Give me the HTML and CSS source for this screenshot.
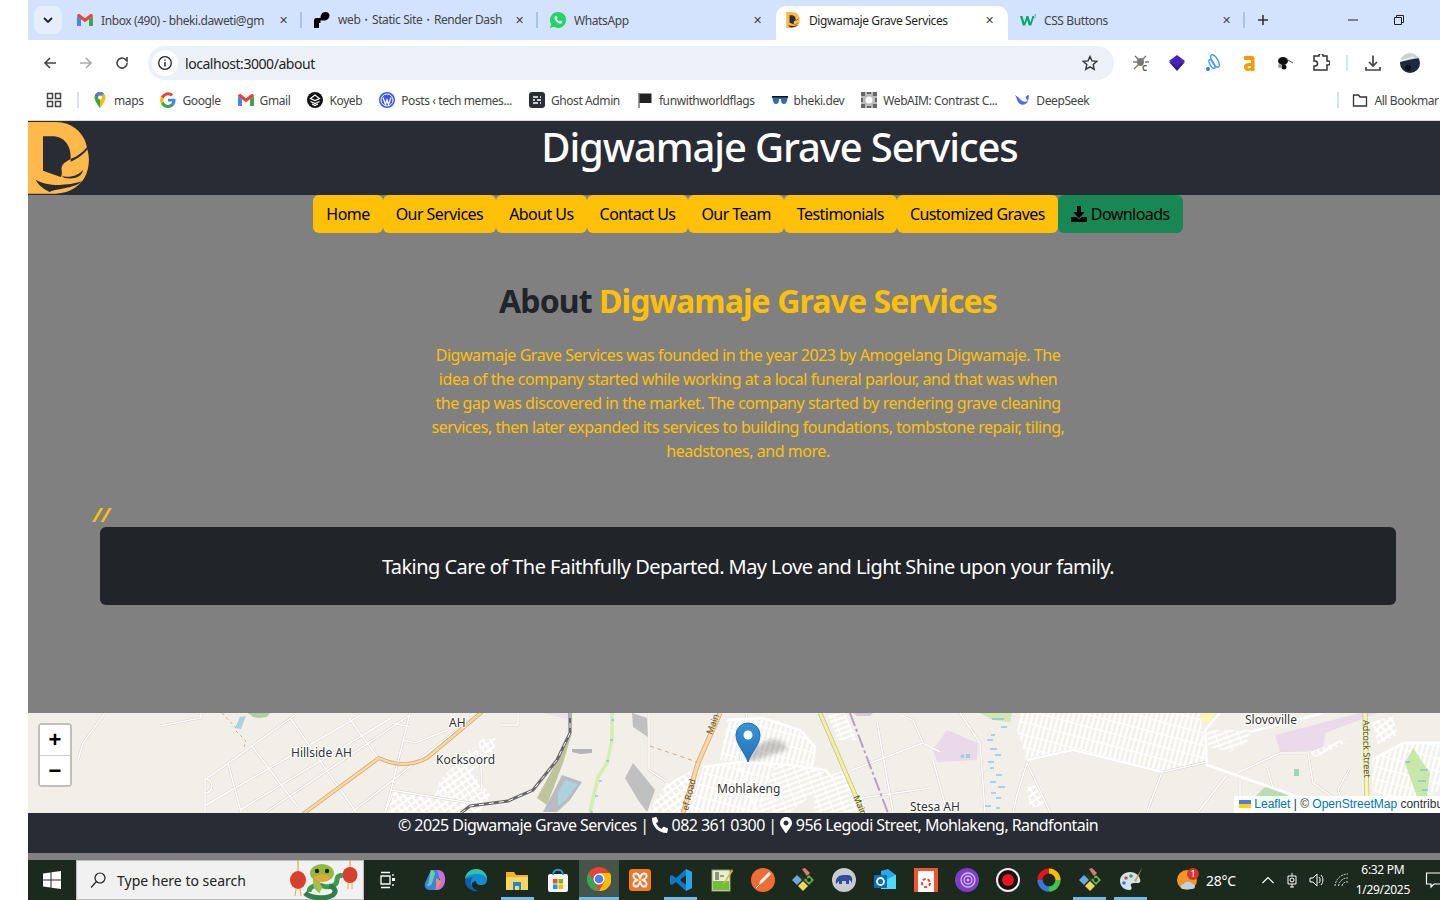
FILE: index.html
```html
<!DOCTYPE html>
<html lang="en">
<head>
    <meta charset="UTF-8">
    <meta name="viewport" content="width=device-width, initial-scale=1.0">
    <title>Digwamaje Grave Services</title>
    <link rel="stylesheet" href="styles.css">
</head>
<body>
    <svg class="sprites" width="0" height="0">
        <defs>
            <symbol id="gmail" viewBox="0 0 24 18">
                <path d="M0 3v13.500C0 17.300.7 18 1.500 18H6V8z" fill="#4285f4"/>
                <path d="M24 3v13.500c0 .8-.7 1.500-1.500 1.500H18V8z" fill="#34a853"/>
                <path d="M18 2.500L24 3v0l-6 5z" fill="#fbbc04"/>
                <path d="M0 3C0 .5 2.700-.8 4.700.7L12 6.200 19.300.7C21.300-.8 24 .5 24 3l-6 5-6 4.500L6 8z" fill="#ea4335"/>
            </symbol>
            <symbol id="logo" viewBox="85 22 183 216">
                <path d="M85 22H170C225 22 258 65 262 100C275 140 265 190 235 212C215 230 190 237 165 237H85Z" fill="#ffb84a"/>
                <path d="M130 65H158C195 65 215 95 213 133C195 143 183 150 186 168C188 178 185 185 183 187L130 168Z" fill="#282c34"/>
                <path d="M213 133C235 125 250 112 262 98L264 104C250 120 230 135 213 141Z" fill="#282c34"/>
                <path d="M186 185C215 190 240 180 250 165C248 185 225 195 195 190Z" fill="#282c34"/>
                <path d="M108 195C140 215 200 215 247 200C225 222 170 222 150 232C130 222 115 210 108 195Z" fill="#282c34"/>
            </symbol>
            <symbol id="gitapp" viewBox="0 0 24 24">
                <path d="M12 3l5 5-5 5-5-5z" fill="#1f3a1f"/>
                <path d="M11 1l3-1 5 5-3 3z" fill="#e8747a"/>
                <path d="M6 7l5 5-5 5-5-5z" fill="#6aa6e8"/>
                <path d="M18 7l5 5-5 5-5-5z" fill="#62b04b"/>
                <path d="M12 13l5 5-5 5-5-5z" fill="#f5d35c"/>
                <path d="M8 2l8 9" stroke="#1b2a1d" stroke-width="1.500"/>
                <circle cx="18" cy="12" r="2" fill="#1b2a1d"/>
            </symbol>
        </defs>
    </svg>

    <div class="browser">
        <div class="tabstrip">
            <button class="tablist-btn">
                <svg width="10" height="6" viewBox="0 0 10 6"><path d="M1 1l4 4 4-4" fill="none" stroke="#1f1f1f" stroke-width="1.800"/></svg>
            </button>
            <div class="tabs">
                <div class="tab sep">
                    <svg class="favicon"><use href="#gmail"/></svg>
                    <span class="tab-title">Inbox (490) - bheki.daweti@gm</span>
                    <span class="tab-close">✕</span>
                </div>
                <div class="tab sep">
                    <svg class="favicon" viewBox="0 0 16 16"><path d="M0 16V8.500C0 6.500 1.500 6 3 6h3.500C6.500 3 8 0 11.500 0c2.500 0 4 1.500 4 3.500S14 8 11 8.500H6.500V11H5v5z" fill="#000"/></svg>
                    <span class="tab-title">web・Static Site・Render Dash</span>
                    <span class="tab-close">✕</span>
                </div>
                <div class="tab">
                    <svg class="favicon" viewBox="0 0 16 16"><path d="M8 0a8 8 0 0 0-6.800 12.200L0 16l3.900-1.200A8 8 0 1 0 8 0z" fill="#25d366"/><path d="M5.500 4c-.8.500-1.200 1.500-.8 2.800.7 2.200 2.500 4 4.600 4.700 1.300.4 2.400 0 2.900-.9l-.2-1.100-1.700-.8-.8.9c-1.200-.5-2.100-1.400-2.700-2.600l.8-.9-.8-1.800z" fill="#fff"/></svg>
                    <span class="tab-title">WhatsApp</span>
                    <span class="tab-close">✕</span>
                </div>
                <div class="tab tab-active">
                    <svg class="favicon"><use href="#logo"/></svg>
                    <span class="tab-title">Digwamaje Grave Services</span>
                    <span class="tab-close">✕</span>
                </div>
                <div class="tab sep">
                    <svg class="favicon" viewBox="0 0 20 16"><path d="M0 3h3l2.500 8L8 3h2.500l2.500 8 2.500-8h2.500l-4 12h-3L9 8l-2.500 7h-3z" fill="#04aa6d"/><text x="17" y="5" class="w3-mark">3</text></svg>
                    <span class="tab-title">CSS Buttons</span>
                    <span class="tab-close">✕</span>
                </div>
            </div>
            <svg class="newtab" width="12" height="12" viewBox="0 0 12 12"><path d="M6 1v10M1 6h10" stroke="#333" stroke-width="1.600"/></svg>
            <div class="win-btns">
                <svg width="12" height="12" viewBox="0 0 12 12"><path d="M1 6h10" stroke="#222"/></svg>
                <svg width="12" height="12" viewBox="0 0 12 12"><path d="M1.500 3.500h7v7h-7zM3.500 3.500v-2h7v7h-2" fill="none" stroke="#222"/></svg>
            </div>
        </div>

        <div class="toolbar">
            <svg class="tool" viewBox="0 0 16 16"><path d="M14 8H3M8 3L3 8l5 5" fill="none" stroke="#444" stroke-width="1.600"/></svg>
            <svg class="tool" viewBox="0 0 16 16"><path d="M2 8h11M8 3l5 5-5 5" fill="none" stroke="#aaa" stroke-width="1.600"/></svg>
            <svg class="tool" viewBox="0 0 16 16"><path d="M13 8a5 5 0 1 1-1.500-3.500L13 6V2" fill="none" stroke="#444" stroke-width="1.600"/></svg>
            <div class="omnibox">
                <span class="site-info">
                    <svg width="16" height="16" viewBox="0 0 16 16"><circle cx="8" cy="8" r="6.300" fill="none" stroke="#222" stroke-width="1.300"/><path d="M8 7v4.500M8 4.500v1.300" stroke="#222" stroke-width="1.400"/></svg>
                </span>
                <span class="url">localhost:3000/about</span>
                <svg class="star" width="16" height="16" viewBox="0 0 16 16"><path d="M8 1.500l2 4.400 4.800.5-3.600 3.200 1 4.700L8 11.900l-4.200 2.400 1-4.700L1.200 6.400 6 5.900z" fill="none" stroke="#333" stroke-width="1.400"/></svg>
            </div>
            <div class="extensions">
                <svg class="ext" viewBox="0 0 18 18"><path d="M3 2l4 4M14 2l-4 4M1 8h4M13 8h4M2 15l4-4" stroke="#777" stroke-width="1.400"/><ellipse cx="8.500" cy="8" rx="3.500" ry="4" fill="#777"/><text x="12.500" y="17" class="ext-c">C</text></svg>
                <svg class="ext" viewBox="0 0 18 18"><path d="M9 9l8-1-8 9-8-9z" fill="#2e1a8a"/><path d="M9 1l8 6-8 6-8-6z" fill="#4a22b8"/></svg>
                <svg class="ext" viewBox="0 0 18 18"><g fill="none" stroke="#3b9cf2" stroke-width="1.400"><ellipse cx="11" cy="7" rx="3" ry="7" transform="rotate(-30 11 7)"/><ellipse cx="8" cy="10" rx="2" ry="5" transform="rotate(-30 8 10)"/></g><circle cx="4" cy="15" r="2" fill="#2a7de1"/></svg>
                <svg class="ext" viewBox="0 0 18 18"><path d="M4 2h8c1.500 0 2.500 1 2.500 2.500V17H11v-1c-2 1.500-7 1.800-7-3.500 0-3.500 4-3.500 7-3.500V6H4zM11 12c-1.500 0-3.500 0-3.500 1.200S10 14.500 11 13.500z" fill="#f90"/></svg>
                <svg class="ext" viewBox="0 0 18 18"><ellipse cx="7" cy="7" rx="5" ry="4" fill="#111"/><circle cx="8" cy="13" r="2.500" fill="#111"/><path d="M12 6l5 3" stroke="#555"/><circle cx="4" cy="12" r="2" fill="#999"/></svg>
                <svg class="ext" viewBox="0 0 18 18"><path d="M2 2h5v-.5a2 2 0 0 1 4 0V2h4v5h1a2 2 0 0 1 0 4h-1v5H2v-4h1a2.500 2.500 0 0 0 0-5H2z" fill="none" stroke="#333" stroke-width="1.500"/></svg>
                <span class="tool-sep"></span>
                <svg class="ext" viewBox="0 0 18 18"><path d="M9 1.500v10M5 8l4 4 4-4M2 13v3h14v-3" fill="none" stroke="#444" stroke-width="1.700"/></svg>
                <svg class="avatar" viewBox="0 0 20 20"><rect width="20" height="20" fill="#c9d2d8"/><path d="M0 9c6-1 10-3 20-4v15H0z" fill="#1c2a44"/><path d="M0 8c5-1 9-3 14-4" stroke="#fff" fill="none"/><circle cx="8" cy="15" r="3" fill="#0c1220"/></svg>
            </div>
        </div>

        <div class="bookmarks">
            <svg class="bm-apps" viewBox="0 0 16 16"><path d="M1.500 1.500h5v5h-5zM9.500 1.500h5v5h-5zM1.500 9.500h5v5h-5zM9.500 9.500h5v5h-5z" fill="none" stroke="#444" stroke-width="1.500"/></svg>
            <span class="bm-sep"></span>
            <div class="bm"><svg class="favicon" viewBox="0 0 16 16"><path d="M8 0a5.500 5.500 0 0 0-5.500 5.500C2.500 9.500 8 16 8 16z" fill="#34a853"/><path d="M8 0a5.500 5.500 0 0 1 5.500 5.500C13.500 9.500 8 16 8 16z" fill="#fbbc04"/><path d="M4 1.500A5.500 5.500 0 0 1 12 1.500L8 5.500z" fill="#4285f4"/><path d="M4 1.500L2.800 3.500 8 5.500z" fill="#ea4335"/><circle cx="8" cy="5.500" r="2" fill="#fff"/></svg>maps</div>
            <div class="bm"><svg class="favicon" viewBox="0 0 16 16"><path d="M15.500 8.200c0-.6 0-1-.1-1.500H8v2.900h4.300a3.700 3.700 0 0 1-1.600 2.400v2h2.500c1.500-1.400 2.300-3.400 2.300-5.800z" fill="#4285f4"/><path d="M8 16c2.100 0 3.900-.7 5.200-1.900l-2.500-2c-.7.500-1.600.8-2.700.8-2 0-3.800-1.400-4.400-3.200H1v2A8 8 0 0 0 8 16z" fill="#34a853"/><path d="M3.600 9.700a4.800 4.800 0 0 1 0-3V4.600H1a8 8 0 0 0 0 7.200z" fill="#fbbc04"/><path d="M8 3.200c1.200 0 2.200.4 3 1.200l2.200-2.200A8 8 0 0 0 1 4.600l2.600 2C4.200 4.600 6 3.200 8 3.200z" fill="#ea4335"/></svg>Google</div>
            <div class="bm"><svg class="favicon"><use href="#gmail"/></svg>Gmail</div>
            <div class="bm"><svg class="favicon" viewBox="0 0 16 16"><circle cx="8" cy="8" r="8" fill="#111"/><path d="M3.500 6.500L8 3l4.500 3.500L8 8.500zM3.500 9.500L8 11.500l4.500-2M5 12l3 1.500 3-1.500" fill="none" stroke="#fff" stroke-width="1.200"/></svg>Koyeb</div>
            <div class="bm"><svg class="favicon" viewBox="0 0 16 16"><circle cx="8" cy="8" r="8" fill="#3858e9"/><circle cx="8" cy="8" r="6" fill="none" stroke="#fff"/><path d="M4 5.500l2.500 7L8 8l1.500 4.500 2.500-7" fill="none" stroke="#fff" stroke-width="1.300"/></svg>Posts ‹ tech memes...</div>
            <div class="bm"><svg class="favicon" viewBox="0 0 16 16"><rect width="16" height="16" rx="3" fill="#2b2f33"/><path d="M4 5h5M11 5h1M4 8h2M8 8h4M4 11h5M11 11h1" stroke="#fff" stroke-width="1.400"/></svg>Ghost Admin</div>
            <div class="bm"><svg class="favicon" viewBox="0 0 16 16"><path d="M2 1v15" stroke="#555" stroke-width="1.200"/><path d="M2.500 1.500h12V11h-12z" fill="#222"/></svg>funwithworldflags</div>
            <div class="bm"><svg class="favicon" viewBox="0 0 16 10"><path d="M0 1h16v2h-.5C15 7 14 9 12 9S9 7 8.800 4H7.200C7 7 6 9 4 9S1 7 .5 3H0z" fill="#2b6ea8"/><path d="M0 1h16v1.500H0z" fill="#111"/></svg>bheki.dev</div>
            <div class="bm"><svg class="favicon" viewBox="0 0 16 16"><rect width="16" height="16" fill="#bbb"/><circle cx="8" cy="8" r="3.500" fill="#fff"/><path d="M0 0h4v4H0zM12 0h4v4h-4zM0 12h4v4H0zM12 12h4v4h-4zM6 0h4v2H6zM6 14h4v2H6zM0 6h2v4H0zM14 6h2v4h-2z" fill="#666"/></svg>WebAIM: Contrast C...</div>
            <div class="bm"><svg class="favicon" viewBox="0 0 16 16"><path d="M1 3c2 3 2 7 5 9s7 0 8-3c-3 1-5 1-7-1S3 4 1 3z" fill="#4d6bfe"/><path d="M15 3c-2 0-3 1-3.500 2.500 1 1 1.500 2.500 1.500 4 1.500-1.500 2-4 2-6.500z" fill="#4d6bfe"/></svg>DeepSeek</div>
            <span class="bm-sep bm-sep-end"></span>
            <div class="bm bm-all"><svg class="favicon" viewBox="0 0 16 16"><path d="M1.500 3h5l1.500 2h6.500v9h-13z" fill="none" stroke="#333" stroke-width="1.300"/></svg>All Bookmar</div>
        </div>

        <div class="page">
            <header class="site-header">
                <svg class="site-logo"><use href="#logo"/></svg>
                <h1>Digwamaje Grave Services</h1>
            </header>

            <main class="site-main">
                <nav class="site-nav">
                    <a href="#">Home</a>
                    <a href="#">Our Services</a>
                    <a href="#">About Us</a>
                    <a href="#">Contact Us</a>
                    <a href="#">Our Team</a>
                    <a href="#">Testimonials</a>
                    <a href="#">Customized Graves</a>
                    <a href="#" class="nav-download">
                        <svg class="fa" viewBox="0 0 512 512"><path d="M216 0h80c13.300 0 24 10.700 24 24v168h87.700c17.800 0 26.700 21.500 14.100 34.100L269.700 378.300c-7.500 7.500-19.800 7.500-27.300 0L90.100 226.100c-12.600-12.600-3.700-34.100 14.100-34.100H192V24c0-13.300 10.700-24 24-24zm296 376v112c0 13.300-10.700 24-24 24H24c-13.300 0-24-10.700-24-24V376c0-13.300 10.700-24 24-24h146.700l49 49c20.100 20.100 52.500 20.100 72.600 0l49-49H488c13.300 0 24 10.700 24 24z"/></svg>
                        Downloads
                    </a>
                </nav>

                <h2 class="about-title">About <span>Digwamaje Grave Services</span></h2>
                <p class="about-text">Digwamaje Grave Services was founded in the year 2023 by Amogelang Digwamaje. The idea of the company started while working at a local funeral parlour, and that was when the gap was discovered in the market. The company started by rendering grave cleaning services, then later expanded its services to building foundations, tombstone repair, tiling, headstones, and more.</p>

                <div class="quote-mark">//</div>
                <div class="quote-box">Taking Care of The Faithfully Departed. May Love and Light Shine upon your family.</div>
            </main>

            <section class="map">
                <svg class="map-art" viewBox="28 713 1412 100" width="1412" height="100">
                    <defs>
                        <pattern id="blockA" width="5" height="12" patternUnits="userSpaceOnUse" patternTransform="rotate(15)">
                            <rect width="5" height="12" fill="#f2efe9"/>
                            <path d="M2.500 0V12M0 0H5" stroke="#fff" stroke-width="2.400"/>
                        </pattern>
                        <pattern id="blockB" width="5" height="11" patternUnits="userSpaceOnUse" patternTransform="rotate(70)">
                            <rect width="5" height="11" fill="#f2efe9"/>
                            <path d="M2.500 0V11M0 0H5" stroke="#fff" stroke-width="2.200"/>
                        </pattern>
                        <pattern id="blockC" width="6" height="6" patternUnits="userSpaceOnUse" patternTransform="rotate(-35)">
                            <rect width="6" height="6" fill="#f2efe9"/>
                            <path d="M0 1H6M1 0V6" stroke="#fff" stroke-width="1.800"/>
                        </pattern>
                        <linearGradient id="pinFill" x1="0" y1="0" x2="0" y2="1">
                            <stop offset="0" stop-color="#3a94d8"/>
                            <stop offset="1" stop-color="#2273b8"/>
                        </linearGradient>
                        <filter id="pinBlur"><feGaussianBlur stdDeviation="2"/></filter>
                        <g id="streets">
                            <path d="M105 713L83 743 78 760M160 726L201 718V713"/>
                            <path d="M295 715L205 780V812M361 715L206 805M391 718L240 810M410 715L266 812M470 720L352 812"/>
                            <path d="M251 745L298 807M228 763L241 812M290 718L356 812M348 717L378 758M410 713L391 790 385 812"/>
                            <path d="M403 740L415 743 448 730M392 723L410 727M205 793a6 6 0 0 0 0 -14"/>
                            <path d="M391 790L470 803M385 812L392 795M480 748L482 790H477"/>
                            <path d="M500 725H518V713M508 713L518 700"/>
                            <path d="M649 713V770L667 782M747 713L740 762"/>
                            <path d="M852 770L923 743M877 722L893 812M862 798L930 788M923 743L913 720 900 715M933 760L947 812M923 743L940 752"/>
                            <path d="M960 713L980 743 985 812M1027 763L1050 812M1027 763L1017 795 1013 812M1162 772L1147 812M1227 775L1198 812"/>
                            <path d="M1280 753L1237 773M1267 767L1273 788M1240 780V800M1308 753L1313 783 1337 800M1350 768L1338 790 1343 803M1280 753L1308 753"/>
                            <path d="M1027 760L1073 750 1163 772 1207 762"/>
                        </g>
                    </defs>
                    <rect x="28" y="713" width="1412" height="100" fill="#f2efe9"/>

                    <!-- parks, water, land use -->
                    <path d="M248 713h22l-3 4-8 1-6-1z" fill="#aed1a0"/>
                    <path d="M240 717l6-1-5 13-6-1z" fill="#aad3df"/>
                    <path d="M222 713L236 728M236 731l10 10-2 6" fill="none" stroke="#d9a96a" stroke-dasharray="3 3"/>
                    <path d="M632 713l15 5 1 19-15-10zM633 763l14 17 8 10-8 22-9-12-13-22z" fill="#c0c0c0"/>
                    <path d="M572 733L537 798 547 805 563 763z" fill="#c0c49a"/>
                    <path d="M562 775L582 782 570 800 557 812H543L553 793z" fill="#b8bcc0"/>
                    <path d="M565 780L578 784 566 800 558 806 558 793z" fill="#aad3df"/>
                    <path d="M572 749H592V753L580 754 572 752z" fill="#b5b5b5"/>
                    <path d="M612 713V740L607 763 598 777 590 812" fill="none" stroke="#d4eeb0" stroke-width="3.500"/>
                    <path d="M543 713H570V720z" fill="#ece0ec"/>
                    <path d="M933 750L947 730 978 743 977 760 937 762z" fill="#e9d9ea"/>
                    <path d="M960 756l3-2 2 3-3 1zM966 754h4v4h-4z" fill="#9ccfd4"/>
                    <path d="M853 713H873L870 716 857 716z" fill="#d8c8d8"/>
                    <path d="M980 713H1012L1010 722 993 720z" fill="#cfe8b0"/>
                    <path d="M1275 735L1360 713H1378L1325 733 1323 750 1280 752z" fill="#ebdaea"/>
                    <path d="M1200 713H1215L1210 722H1202zM1137 743H1143V748H1138z" fill="#fdf7b0"/>
                    <path d="M1167 713H1182L1180 720H1170z" fill="#b4b48a"/>
                    <path d="M1212 740h5v4h-5zM1294 769h5v7h-5z" fill="#96dcb9"/>
                    <path d="M1255 797L1267 785 1293 798 1290 813H1255z" fill="#b9dcb0"/>

                    <!-- residential blocks -->
                    <path d="M727 720L763 718 800 730 815 747 812 767 740 762 720 760z" fill="url(#blockA)"/>
                    <path d="M703 767L740 762 775 765 790 790 757 812H690z" fill="url(#blockA)"/>
                    <path d="M775 765L825 770 812 795 790 812H757z" fill="url(#blockB)"/>
                    <path d="M812 780L847 770 855 790 860 812H815z" fill="url(#blockB)"/>
                    <path d="M648 812L667 783 700 767 690 812z" fill="url(#blockC)"/>
                    <path d="M828 715L845 713 857 740 838 740z" fill="url(#blockB)"/>
                    <path d="M1020 713H1200L1207 760 1163 772 1073 750 1027 760 1017 730z" fill="url(#blockA)"/>
                    <path d="M1207 730L1250 730 1247 743 1230 752 1208 747z" fill="url(#blockB)"/>
                    <path d="M1027 787L1040 785 1045 805 1030 808z" fill="url(#blockC)"/>
                    <path d="M1310 752L1347 738 1342 745 1315 757z" fill="url(#blockC)"/>
                    <path d="M1372 722L1393 716 1397 735 1378 745z" fill="url(#blockC)"/>
                    <path d="M1372 760L1403 743H1440V790L1407 807 1372 790z" fill="url(#blockA)"/>
                    <path d="M1413 748L1430 773 1427 797H1417L1405 763z" fill="#c7e8a8"/>
                    <path d="M440 780L470 750 484 752 472 773 490 795 480 812H430z" fill="url(#blockC)"/>
                    <path d="M478 740L496 738 494 758 482 765z" fill="url(#blockC)"/>
                    <path d="M385 812L392 790 470 803 470 812z" fill="url(#blockC)"/>

                    <!-- minor streets -->
                    <g fill="none">
                        <use href="#streets" stroke="#d4d0c8" stroke-width="2.400"/>
                        <use href="#streets" stroke="#fff" stroke-width="1.500"/>
                    </g>
                    <g fill="none" stroke="#fff" stroke-width="2.600">
                        <path d="M703 767L740 762 790 765 825 770 833 778M738 762L757 812M727 720L763 718 800 730 815 747 812 767"/>
                        <path d="M1205 730L1207 765 1307 800M1205 730L1220 713M1250 732L1323 713M1027 760L1073 750 1163 772"/>
                        <path d="M1372 760L1403 743H1440"/>
                    </g>

                    <!-- main roads -->
                    <path d="M303 814L379 758Q404 770 427 758L482 712" fill="none" stroke="#d9a96a" stroke-width="4"/>
                    <path d="M303 814L379 758Q404 770 427 758L482 712" fill="none" stroke="#f7d9a8" stroke-width="2.400"/>
                    <path d="M720 713L698 763 683 813" fill="none" stroke="#d9a96a" stroke-width="5"/>
                    <path d="M720 713L698 763 683 813" fill="none" stroke="#fcd6a4" stroke-width="3.400"/>
                    <path d="M820 713L863 813" fill="none" stroke="#c4c47a" stroke-width="4.500"/>
                    <path d="M820 713L863 813" fill="none" stroke="#f0f0a8" stroke-width="3"/>
                    <path d="M1365 713L1367 800" fill="none" stroke="#c4c47a" stroke-width="5"/>
                    <path d="M1365 713L1367 800" fill="none" stroke="#f6f6b4" stroke-width="3.500"/>
                    <path d="M570 713V733L557 760 533 790 508 801 470 806 461 813" fill="none" stroke="#666" stroke-width="3"/>
                    <path d="M570 713V733L557 760 533 790 508 801 470 806 461 813" fill="none" stroke="#fff" stroke-width="1" stroke-dasharray="5 5"/>
                    <path d="M850 713L888 813" fill="none" stroke="#b89ec0" stroke-width="2" stroke-dasharray="14 3 3 3"/>
                    <path d="M650 746L697 762" fill="none" stroke="#d3a77a" stroke-dasharray="4 4"/>

                    <!-- water dashes -->
                    <path d="M611 720h3M610 740h3M606 761h3M599 781h3M595 796h3M590 812h3M992 719h12M1001 727h6M991 735h4M987 740h6M990 749h7M995 755h6M988 762h6M990 768h4M996 775h6M990 782h6M998 787h7M991 793h5M996 798h5M985 806h6M996 808h4M1405 762h5M1420 770h8M1418 781h8M1422 790h6M1418 797h8" stroke="#5fb3f2" stroke-width="1"/>

                    <g class="map-labels">
                        <text x="449" y="727">AH</text>
                        <text x="291" y="757">Hillside AH</text>
                        <text x="436" y="764">Kocksoord</text>
                        <text x="717" y="793">Mohlakeng</text>
                        <text x="910" y="811">Stesa AH</text>
                        <text x="1245" y="724">Slovoville</text>
                    </g>
                    <g class="map-road-labels">
                        <text transform="translate(712 735) rotate(-70)">Main</text>
                        <text transform="translate(688 811) rotate(-76)">ef Road</text>
                        <text transform="translate(853 797) rotate(67)">Main</text>
                        <text transform="translate(1363 720) rotate(89)">Adcock Street</text>
                    </g>

                    <!-- marker -->
                    <path d="M749 762L786 750C790 744 778 738 768 740L745 752z" fill="#000" opacity=".2" filter="url(#pinBlur)"/>
                    <path d="M748 762C745 752 736 745 736 735a12 12 0 0 1 24 0c0 10-9 17-12 27z" fill="url(#pinFill)" stroke="#1f6fb0"/>
                    <circle cx="748" cy="735" r="4.500" fill="#fff"/>
                </svg>

                <div class="zoom-ctl">
                    <span class="zoom-btn">+</span>
                    <span class="zoom-btn">−</span>
                </div>
                <div class="attribution">
                    <svg width="12" height="8" viewBox="0 0 12 8"><rect width="12" height="4" fill="#4c7be1"/><rect y="4" width="12" height="4" fill="#ffd500"/></svg>
                    <a href="#">Leaflet</a> | © <a href="#">OpenStreetMap</a> contribu
                </div>
            </section>

            <footer class="site-footer">
                © 2025 Digwamaje Grave Services |
                <svg class="fa" viewBox="0 0 512 512"><path d="M497.390 361.800l-112-48a24 24 0 0 0-28 6.900l-49.600 60.600A370.660 370.660 0 0 1 130.600 204.110l60.600-49.600a23.940 23.940 0 0 0 6.900-28l-48-112A24.160 24.160 0 0 0 122.600.61l-104 24A24 24 0 0 0 0 48c0 256.500 207.900 464 464 464a24 24 0 0 0 23.400-18.600l24-104a24.290 24.290 0 0 0-14.010-27.600z"/></svg>
                082 361 0300 |
                <svg class="fa fa-pin" viewBox="0 0 384 512"><path d="M172.268 501.670C26.970 291.031 0 269.413 0 192 0 85.961 85.961 0 192 0s192 85.961 192 192c0 77.413-26.970 99.031-172.268 309.670-9.535 13.774-29.930 13.773-39.464 0zM192 272c44.183 0 80-35.817 80-80s-35.817-80-80-80-80 35.817-80 80 35.817 80 80 80z"/></svg>
                956 Legodi Street, Mohlakeng, Randfontain
            </footer>
        </div>

        <div class="page-gap"></div>

        <div class="taskbar">
            <div class="start"><svg width="18" height="18" viewBox="0 0 18 18"><path d="M0 2.500l7.500-1V8.500H0zM8.500 1.300L18 0v8.500H8.500zM0 9.500h7.500v7l-7.500-1zM8.500 9.500H18V18l-9.500-1.300z" fill="#fff"/></svg></div>
            <div class="search">
                <svg width="18" height="18" viewBox="0 0 18 18"><circle cx="11" cy="7" r="5" fill="none" stroke="#222" stroke-width="1.200"/><path d="M7.500 10.500L2 16.500" stroke="#222" stroke-width="1.200"/></svg>
                <span>Type here to search</span>
                <svg class="snake" width="72" height="40" viewBox="0 0 72 40">
                    <path d="M11 0v12M63 0v8" stroke="#c9a03a"/>
                    <ellipse cx="11" cy="20" rx="8" ry="9" fill="#d8402c"/>
                    <ellipse cx="63" cy="15" rx="7.500" ry="8" fill="#d8402c"/>
                    <path d="M9 29l-1 7M13 29l1 7M61 23v6M65 23v6" stroke="#e2b23a"/>
                    <path d="M22 32c0-6 8-8 14-6s14 0 14-6c0-4 3-5 6-4" fill="none" stroke="#3f9a52" stroke-width="5"/>
                    <path d="M18 33c6 6 22 6 28 2 4-3 2-8-4-9" fill="none" stroke="#2f7f46" stroke-width="5"/>
                    <path d="M30 16c-2 6 0 12 4 14" fill="none" stroke="#a0c24a" stroke-width="7"/>
                    <ellipse cx="35" cy="13" rx="12" ry="9" fill="#8fbb3f"/>
                    <ellipse cx="35" cy="18" rx="8" ry="3.500" fill="#e6a63a"/>
                    <circle cx="30" cy="11" r="2.200" fill="#222"/><circle cx="40" cy="11" r="2.200" fill="#222"/>
                </svg>
            </div>
            <div class="task-view"><svg width="18" height="18" viewBox="0 0 18 18"><path d="M2 1.500h9M2 16.500h9M2 5h9v8H2zM14 3v2M14 13v2" fill="none" stroke="#fff" stroke-width="1.300"/><path d="M13 7h3v3h-3z" fill="#fff"/></svg></div>
            <div class="apps">
                <div class="app"><svg viewBox="0 0 24 24"><path d="M8 2h6l3 6-4 14H7c-4 0-6-3-5-7z" fill="#3b82e8"/><path d="M14 2c5 0 7 2 8 7 1 6-2 13-8 13h-3c4-1 6-5 6-9z" fill="#c86ee0"/><path d="M8 2c3 0 4 2 4 4l-3 9c-1 3-3 3-5 3 3-4 2-11 4-16z" fill="#5fd0a0"/><path d="M13 10l5 3c-1 5-3 8-6 9 2-3 1-8 1-12z" fill="#f58a5c"/></svg></div>
                <div class="app"><svg viewBox="0 0 24 24"><path d="M12 1a11 11 0 0 1 11 11c0 4-3 5-6 5-4 0-5-2-5-4-3 0-6 3-3 7 1 2 2 3 5 3A11 11 0 0 1 12 1z" fill="#0f8bd8"/><path d="M1 12C1 5 6 1 12 1c6 0 11 4 11 10-2-4-6-5-10-5C6 6 2 8 1 12z" fill="#35c1a3"/><path d="M1 12c2-2 5-3 8-2-4 3-3 10 5 13A11 11 0 0 1 1 12z" fill="#0c5fa8"/></svg></div>
                <div class="app app-run"><svg viewBox="0 0 24 24"><path d="M1 4h8l2 3h12v15H1z" fill="#f0b429"/><path d="M1 9h22v13H1z" fill="#fcd462"/><path d="M8 14h8v8h-2v-4h-4v4H8z" fill="#1e88d8"/></svg></div>
                <div class="app"><svg viewBox="0 0 24 24"><rect x="2" y="6" width="20" height="18" rx="2" fill="#f4f4f4"/><path d="M7 7c0-7 10-7 10 0" fill="none" stroke="#1e9de0" stroke-width="2"/><path d="M7 11h4.500v4.500H7z" fill="#f25022"/><path d="M12.500 11H17v4.500h-4.500z" fill="#7fba00"/><path d="M7 16.500h4.500V21H7z" fill="#00a4ef"/><path d="M12.500 16.500H17V21h-4.500z" fill="#ffb900"/></svg></div>
                <div class="app app-active"><svg viewBox="0 0 24 24"><circle cx="12" cy="12" r="12" fill="#ea4335"/><path d="M12 24A12 12 0 0 1 1.600 6L8 16.500 12 24z" fill="#34a853"/><path d="M12 24l5.500-9.500L12 6h10.900A12 12 0 0 1 12 24z" fill="#fbbc04"/><circle cx="12" cy="12" r="5.500" fill="#fff"/><circle cx="12" cy="12" r="4.300" fill="#4285f4"/></svg></div>
                <div class="app"><svg viewBox="0 0 24 24"><rect x="1" y="1" width="22" height="22" rx="3" fill="#f4762a"/><path d="M6 6c4-2 5 2 6 4 1-2 2-6 6-4 2 3-1 5-3 6 2 1 5 3 3 6-4 2-5-2-6-4-1 2-2 6-6 4-2-3 1-5 3-6-2-1-5-3-3-6z" fill="none" stroke="#fff" stroke-width="2"/></svg></div>
                <div class="app app-run"><svg viewBox="0 0 24 24"><path d="M17 1l6 3v16l-6 3L7 14l-4 3-2-1V8l2-1 4 3z" fill="#0e7ac4"/><path d="M17 7v10l-6-5z" fill="#1b2a1d"/><path d="M17 1l6 3v16l-6 3z" fill="#28a4ec"/></svg></div>
                <div class="app"><svg viewBox="0 0 24 24"><rect x="2" y="2" width="18" height="21" fill="#e8eed0" stroke="#8aa060"/><rect x="3" y="13" width="16" height="9" fill="#6fbf3a"/><path d="M6 4v8M8 4v8M10 8h4" stroke="#555" stroke-width="1.200"/><path d="M22 1L14 14l-2 3 3-2L23 3z" fill="#e8b33a"/></svg></div>
                <div class="app"><svg viewBox="0 0 24 24"><circle cx="12" cy="12" r="12" fill="#ef6c35"/><path d="M18 4l2 2-9 9-3 2 1-4z" fill="#fff"/><path d="M5 20l3-3" stroke="#fff"/></svg></div>
                <div class="app"><svg viewBox="0 0 24 24"><use href="#gitapp"/></svg></div>
                <div class="app"><svg viewBox="0 0 24 24"><circle cx="12" cy="12" r="12" fill="#c8ccd0"/><path d="M4 16c-1-5 2-9 7-9h5c3 0 5 3 4 6l-1 3v-3l-2-1v4h-3v-3H10v3H7v-3l-1 1z" fill="#2f4f9e"/></svg></div>
                <div class="app"><svg viewBox="0 0 24 24"><path d="M8 3l7-2 8 6v14H8z" fill="#28a8ea"/><path d="M8 14l15-7v14H8z" fill="#50d9ff"/><rect x="1" y="7" width="13" height="13" rx="1" fill="#0f6cbd"/><circle cx="7.500" cy="13.500" r="3.500" fill="none" stroke="#fff" stroke-width="1.800"/></svg></div>
                <div class="app"><svg viewBox="0 0 24 24"><rect x="0" width="24" height="24" fill="#f0562d"/><rect x="4" y="0" width="16" height="24" fill="#fff"/><circle cx="12" cy="15" r="4" fill="none" stroke="#e8452a" stroke-width="2" stroke-dasharray="3 2"/><rect x="0" width="24" height="3" fill="#f0562d"/></svg></div>
                <div class="app"><svg viewBox="0 0 24 24"><circle cx="12" cy="12" r="12" fill="#7d3fc7"/><circle cx="13" cy="12" r="7" fill="none" stroke="#d9b8f5" stroke-width="1.300"/><circle cx="13" cy="12" r="4" fill="none" stroke="#d9b8f5" stroke-width="1.300"/><circle cx="13" cy="12" r="1.500" fill="#d9b8f5"/></svg></div>
                <div class="app"><svg viewBox="0 0 24 24"><circle cx="12" cy="12" r="11" fill="#111" stroke="#eee" stroke-width="2"/><circle cx="12" cy="12" r="6" fill="#e8141c"/></svg></div>
                <div class="app"><svg viewBox="0 0 24 24"><circle cx="12" cy="12" r="9" fill="none" stroke="#e8141c" stroke-width="5"/><path d="M12 3a9 9 0 0 1 9 9" fill="none" stroke="#fbbc04" stroke-width="5"/><path d="M21 12a9 9 0 0 1-9 9" fill="none" stroke="#34c94f" stroke-width="5"/><path d="M12 21a9 9 0 0 1-9-9" fill="none" stroke="#2a7de1" stroke-width="5"/></svg></div>
                <div class="app app-run"><svg viewBox="0 0 24 24"><use href="#gitapp"/></svg></div>
                <div class="app app-run"><svg viewBox="0 0 24 24"><path d="M11 4C5 4 1 8 1 13s4 9 9 9c3 0 3-2 2-4s1-3 3-3h4c2 0 3-2 2-4-1-4-5-7-10-7z" fill="#cfe3f0"/><circle cx="7" cy="10" r="1.800" fill="#e8452a"/><circle cx="12" cy="8" r="1.800" fill="#3ca04a"/><circle cx="5" cy="15" r="1.800" fill="#2a7de1"/><path d="M23 0l-6 14-2-1z" fill="#d89a3a"/></svg></div>
            </div>
            <div class="weather">
                <svg width="24" height="24" viewBox="0 0 24 24"><circle cx="10" cy="12" r="10" fill="#f2962a"/><path d="M6 21c-3 0-3-5 1-5 1-3 7-3 8 0 4 0 4 5 0 5z" fill="#bcd4e8"/><circle cx="16" cy="6" r="6" fill="#d8342c"/><text x="16" y="9" class="badge-num">1</text></svg>
                <span>28°C</span>
            </div>
            <div class="tray">
                <svg width="14" height="14" viewBox="0 0 14 14"><path d="M1.500 10L7 4.500 12.500 10" fill="none" stroke="#fff" stroke-width="1.200"/></svg>
                <svg width="16" height="16" viewBox="0 0 16 16"><path d="M4 4h8v8H4zM8 1v3M8 12v3M6 15h4" fill="none" stroke="#fff"/><circle cx="8" cy="8" r="2" fill="none" stroke="#fff"/></svg>
                <svg width="16" height="16" viewBox="0 0 16 16"><path d="M1 6h3l4-4v12l-4-4H1zM10 5c1.500 2 1.500 4 0 6M12 3c2.500 3 2.500 7 0 10" fill="none" stroke="#fff"/></svg>
                <svg width="16" height="16" viewBox="0 0 16 16"><path d="M1 14a13 13 0 0 1 13-12M4.500 14A9 9 0 0 1 14 6M8 14a5 5 0 0 1 6-4" fill="none" stroke="#ddd" stroke-dasharray="2 1"/></svg>
            </div>
            <div class="clock"><span>6:32 PM</span><span>1/29/2025</span></div>
            <svg class="notify" width="20" height="20" viewBox="0 0 20 20"><path d="M1.500 3h17v11H9l-3 3v-3H1.500z" fill="none" stroke="#fff" stroke-width="1.200"/></svg>
        </div>
    </div>
</body>
</html>
```

FILE: styles.css
```css
* {
    box-sizing: border-box;
}

html, body {
    margin: 0;
    height: 900px;
    overflow: hidden;
    background-color: #fff;
}

body {
    padding-left: 28px;
    font-family: "Noto Sans", sans-serif;
}

.sprites {
    position: absolute;
}

.browser {
    display: flex;
    flex-direction: column;
    height: 900px;
    overflow: hidden;
}

/* browser tabs */
.tabstrip {
    display: flex;
    align-items: flex-end;
    height: 40px;
    background-color: #d3e3fd;
}

.tablist-btn {
    display: flex;
    align-items: center;
    justify-content: center;
    flex: none;
    width: 28px;
    height: 28px;
    margin: 0 3px 6px 6px;
    border: none;
    border-radius: 8px;
    background-color: #e6eefc;
}

.tabs {
    display: grid;
    grid-template-columns: 237px 236px 238px 232px 237px;
    height: 34px;
}

.tab {
    display: flex;
    align-items: center;
    gap: 8px;
    position: relative;
    padding: 0 13px 6px 12px;
    font-size: 12px;
    color: #444;
    min-width: 0;
}

.sep::after {
    content: "";
    position: absolute;
    right: 0;
    top: 6px;
    height: 16px;
    border-right: 2px solid #a8c4ee;
}

.tab-active {
    padding-left: 9px;
    background-color: #fff;
    border-radius: 10px 10px 0 0;
    color: #1f1f1f;
}

.favicon {
    flex: none;
    width: 16px;
    height: 16px;
}

.tab-title {
    flex: 1;
    overflow: hidden;
    white-space: nowrap;
    letter-spacing: -0.4px;
}

.tab-close {
    flex: none;
    width: 12px;
    font-size: 11px;
    line-height: 12px;
    text-align: center;
    color: #444;
}

.w3-mark {
    font-size: 7px;
    fill: #04aa6d;
}

.newtab {
    flex: none;
    margin: 0 0 14px 12px;
}

.win-btns {
    display: flex;
    gap: 34px;
    margin: 0 0 14px 78px;
}

/* address bar */
.toolbar {
    display: flex;
    align-items: center;
    height: 46px;
    padding-left: 14px;
    background-color: #fff;
    gap: 20px;
}

.tool {
    flex: none;
    width: 16px;
    height: 16px;
}

.omnibox {
    display: flex;
    flex: none;
    align-items: center;
    width: 966px;
    height: 34px;
    margin-left: -2px;
    padding: 0 16px 0 4px;
    border-radius: 17px;
    background-color: #ebf0f9;
}

.site-info {
    display: flex;
    align-items: center;
    justify-content: center;
    width: 26px;
    height: 26px;
    border-radius: 50%;
    background-color: #fff;
}

.url {
    flex: 1;
    margin-left: 7px;
    font-size: 14px;
    color: #1f1f1f;
    letter-spacing: -0.45px;
}

.extensions {
    display: flex;
    align-items: center;
    gap: 18px;
    margin-left: -2px;
}

.ext {
    flex: none;
    width: 18px;
    height: 18px;
}

.ext-c {
    font-size: 8px;
    text-anchor: middle;
    font-weight: 700;
    fill: #555;
}

.tool-sep {
    width: 2px;
    height: 16px;
    background-color: #d3e3fd;
    margin: 0 -2px 0 -2px;
}

.avatar {
    flex: none;
    width: 20px;
    height: 20px;
    border-radius: 50%;
}

/* bookmarks */
.bookmarks {
    display: flex;
    align-items: center;
    gap: 17px;
    height: 34px;
    padding: 0 0 6px 18px;
    font-size: 12px;
    color: #444;
    background-color: #fff;
    letter-spacing: -0.4px;
    white-space: nowrap;
}

.bm-apps {
    flex: none;
    width: 16px;
    height: 16px;
}

.bm {
    display: flex;
    align-items: center;
    gap: 6px;
}

.bm-sep {
    flex: none;
    width: 2px;
    height: 16px;
    margin: 0 -4px 0 -2px;
    background-color: #d3e3fd;
}

.bm-sep-end {
    margin-left: 231px;
}

/* the site */
.page {
    display: flex;
    flex-direction: column;
    height: 733px;
    border-top: 1px solid #d8d8d8;
}

.site-header {
    display: flex;
    align-items: flex-start;
    flex: none;
    height: 74px;
    background-color: #282c34;
    color: #fff;
}

.site-logo {
    flex: none;
    width: 61px;
    height: 72px;
    margin-top: 1px;
}

.site-header h1 {
    flex: 1;
    margin: 0 0 0 30px;
    font-size: 40px;
    line-height: 52px;
    font-weight: 500;
    letter-spacing: -0.028em;
    text-align: center;
}

.site-main {
    flex: none;
    height: 518px;
    padding: 0 44px 0 72px;
    background-color: #808080;
}

.site-nav {
    display: flex;
    justify-content: center;
}

.site-nav a {
    display: flex;
    align-items: center;
    gap: 4px;
    height: 38px;
    padding: 0 13px;
    border-radius: 6px;
    background-color: #ffc107;
    color: #000;
    font-size: 16px;
    letter-spacing: -0.035em;
    text-decoration: none;
}

.site-nav .nav-download {
    background-color: #198754;
}

.fa {
    width: 16px;
    height: 16px;
    fill: currentColor;
    vertical-align: -2px;
}

.fa-pin {
    width: 12px;
}

.about-title {
    margin: 46px 0 0;
    font-size: 32px;
    line-height: 44px;
    font-weight: 700;
    letter-spacing: -0.028em;
    text-align: center;
    color: #212529;
}

.about-title span {
    color: #ffc107;
}

.about-text {
    width: 640px;
    margin: 20px auto 0;
    font-size: 16px;
    line-height: 24px;
    letter-spacing: -0.028em;
    text-align: center;
    color: #ffc107;
}

.quote-mark {
    margin: 40px 0 0 -7px;
    height: 24px;
    font-size: 20px;
    line-height: 24px;
    font-style: italic;
    font-weight: 700;
    color: #ffc107;
}

.quote-box {
    display: flex;
    align-items: center;
    justify-content: center;
    height: 78px;
    border-radius: 6px;
    background-color: #212529;
    color: #fff;
    font-size: 20px;
    letter-spacing: -0.028em;
}

.map {
    position: relative;
    flex: none;
    height: 100px;
    overflow: hidden;
}

.map-art {
    display: block;
}

.map-labels text {
    font-size: 12px;
    fill: #333;
    paint-order: stroke;
    stroke: #fff;
    stroke-width: 2px;
}

.map-road-labels text {
    font-size: 9px;
    fill: #553;
}

.zoom-ctl {
    position: absolute;
    left: 10px;
    top: 10px;
    display: flex;
    flex-direction: column;
    width: 34px;
    border: 2px solid rgba(0, 0, 0, 0.2);
    border-radius: 4px;
    background-clip: padding-box;
}

.zoom-btn {
    display: block;
    height: 30px;
    background-color: #fff;
    font: 700 22px/30px "Liberation Sans", sans-serif;
    text-align: center;
    color: #000;
}

.zoom-btn + .zoom-btn {
    border-top: 1px solid #ccc;
}

.attribution {
    position: absolute;
    right: 0;
    bottom: 0;
    width: 206px;
    height: 17px;
    padding: 0 0 0 5px;
    background-color: rgba(255, 255, 255, 0.85);
    font: 12px/17px "Liberation Sans", sans-serif;
    color: #333;
    white-space: nowrap;
}

.attribution a {
    color: #0078a8;
    text-decoration: none;
}

.site-footer {
    flex: none;
    height: 40px;
    padding: 0 0 0 28px;
    background-color: #282c34;
    color: #fff;
    font-size: 16px;
    line-height: 24px;
    letter-spacing: -0.035em;
    text-align: center;
}

.page-gap {
    flex: none;
    height: 7px;
    background-color: #808080;
}

/* windows taskbar */
.taskbar {
    display: flex;
    align-items: center;
    flex: none;
    height: 40px;
    background-color: #1b2a1d;
}

.start {
    display: flex;
    align-items: center;
    justify-content: center;
    flex: none;
    width: 48px;
}

.search {
    display: flex;
    align-items: center;
    position: relative;
    flex: none;
    width: 288px;
    height: 40px;
    padding-left: 12px;
    gap: 10px;
    background-color: #f1f1f1;
    border: 1px solid #bbb;
    font-size: 14px;
    color: #222;
}

.snake {
    position: absolute;
    right: 4px;
    top: -1px;
}

.task-view {
    display: flex;
    justify-content: center;
    flex: none;
    width: 48px;
}

.apps {
    display: flex;
    flex: none;
    margin-left: 3px;
}

.app {
    display: flex;
    align-items: center;
    justify-content: center;
    position: relative;
    flex: none;
    width: 40.9px;
    height: 40px;
}

.app svg {
    width: 24px;
    height: 24px;
}

.app-active {
    background-color: #46554a;
    border-bottom: 3px solid #76b9ed;
}

.app-run::after {
    content: "";
    position: absolute;
    left: 4px;
    right: 4px;
    bottom: 0;
    height: 3px;
    background-color: #76b9ed;
}

.weather {
    display: flex;
    align-items: center;
    flex: none;
    gap: 5px;
    margin-left: 26px;
    font-size: 14px;
    color: #fff;
    letter-spacing: -0.3px;
}

.badge-num {
    font-size: 9px;
    fill: #fff;
    text-anchor: middle;
}

.tray {
    display: flex;
    align-items: center;
    flex: none;
    gap: 9px;
    margin-left: 25px;
}

.clock {
    display: flex;
    flex-direction: column;
    align-items: center;
    flex: none;
    margin-left: 6px;
    font-size: 12px;
    line-height: 20px;
    color: #fff;
    letter-spacing: -0.3px;
}

.notify {
    flex: none;
    margin-left: 15px;
}
```
